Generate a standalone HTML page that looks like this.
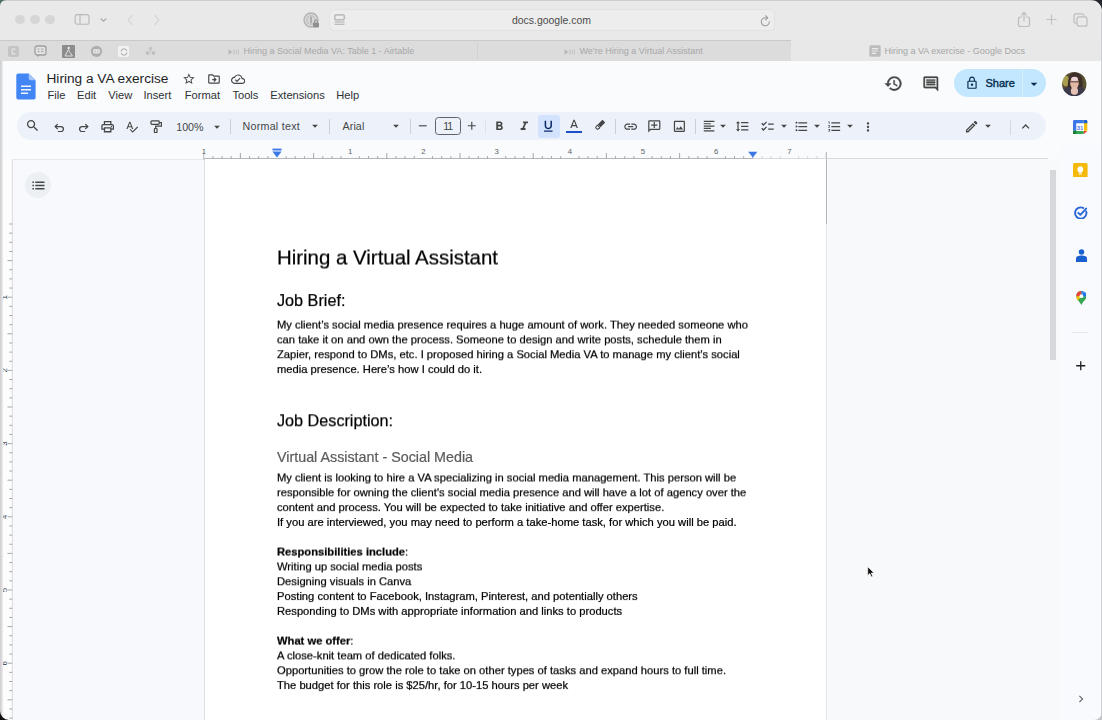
<!DOCTYPE html>
<html>
<head>
<meta charset="utf-8">
<title>Hiring a VA exercise - Google Docs</title>
<style>
*{box-sizing:border-box;margin:0;padding:0}
html,body{width:1102px;height:720px;overflow:hidden;background:#f9fbfd}
body{font-family:"Liberation Sans",sans-serif;position:relative;color:#202124}
.abs{position:absolute;display:block}
.t{position:absolute;white-space:nowrap;line-height:1}
.doc{position:absolute;left:277px;white-space:nowrap;color:#000;line-height:1;will-change:transform;-webkit-text-stroke:.22px currentColor}
</style>
</head>
<body>
<!-- ===== Safari chrome ===== -->
<div class="abs" style="left:0px;top:0px;width:1102px;height:40px;background:#e9e9e9;"></div>
<div class="abs" style="left:0px;top:0px;width:1102px;height:1px;background:#cdcdcd;"></div>
<div class="abs" style="left:0px;top:40px;width:791px;height:21px;background:#dcdcdc;border-top:1px solid #c9c9c9"></div>
<div class="abs" style="left:791px;top:40px;width:311px;height:21px;background:#e8e8e8;"></div>
<div class="abs" style="left:477px;top:43px;width:1px;height:16px;background:#d2d2d2;"></div>
<svg class="abs" style="left:0;top:0" width="8" height="8" viewBox="0 0 8 8"><path d="M0 0h6A6 6 0 0 0 0 6z" fill="#4f6e69"/></svg>
<svg class="abs" style="left:1088px;top:0" width="14" height="14" viewBox="0 0 14 14"><path d="M14 0H3A11 11 0 0 1 14 11z" fill="#23262b"/></svg>
<div class="abs" style="left:15.2px;top:14.9px;width:9.6px;height:9.6px;background:#d6d6d6;border-radius:50%"></div>
<div class="abs" style="left:30.2px;top:14.9px;width:9.6px;height:9.6px;background:#d6d6d6;border-radius:50%"></div>
<div class="abs" style="left:45.2px;top:14.9px;width:9.6px;height:9.6px;background:#d6d6d6;border-radius:50%"></div>
<svg class="abs" style="left:74px;top:13px" width="17" height="13" viewBox="0 0 17 13"><rect x="1.200" y="1.600" width="13.800" height="9.600" rx="2" fill="none" stroke="#b9b9b9" stroke-width="1.150"/><path d="M6 1.600v9.600" stroke="#b9b9b9" stroke-width="1.150"/></svg>
<svg class="abs" style="left:99px;top:16.500px" width="9" height="7" viewBox="0 0 9 7"><path d="M2 1.800L4.500 4.200L7 1.800" fill="none" stroke="#adadad" stroke-width="1.200" stroke-linecap="round" stroke-linejoin="round"/></svg>
<svg class="abs" style="left:125px;top:13px" width="10" height="14" viewBox="0 0 10 14"><path d="M7.200 2.600L3 7L7.200 11.400" fill="none" stroke="#d8d8d8" stroke-width="1.400" stroke-linecap="round" stroke-linejoin="round"/></svg>
<svg class="abs" style="left:152px;top:13px" width="10" height="14" viewBox="0 0 10 14"><path d="M2.800 2.600L7 7L2.800 11.400" fill="none" stroke="#d8d8d8" stroke-width="1.400" stroke-linecap="round" stroke-linejoin="round"/></svg>
<svg class="abs" style="left:303px;top:11.500px" width="17" height="17" viewBox="0 0 17 17"><circle cx="8" cy="8" r="7" fill="#d6d6d6" stroke="#b2b2b2" stroke-width="1.300"/><circle cx="8" cy="8" r="4.300" fill="none" stroke="#bdbdbd" stroke-width="1"/><rect x="7.200" y="4.500" width="1.700" height="7" rx=".8" fill="#a9a9a9"/><rect x="10" y="10.500" width="6" height="5" rx="1" fill="#8f8f8f"/><path d="M11.500 10.500v-1.200a1.500 1.500 0 0 1 3 0v1.200" fill="none" stroke="#8f8f8f" stroke-width="1"/></svg>
<div class="abs" style="left:329px;top:9px;width:446px;height:21.5px;background:#ededed;border-radius:5.500px;border:1px solid #e2e2e2"></div>
<svg class="abs" style="left:333.500px;top:13.800px" width="11" height="11" viewBox="0 0 11 11"><rect x=".8" y=".8" width="9.400" height="5" rx="1" fill="none" stroke="#adadad" stroke-width="1.200"/><path d="M.5 8h10M.5 10.300h10" stroke="#adadad" stroke-width="1.100"/></svg>
<div class="t" style="left:512px;top:15.7px;font-size:10.45px;color:#4c4c4c;">docs.google.com</div>
<svg class="abs" style="left:759.500px;top:15px" width="11" height="12" viewBox="0 0 11 12"><path d="M9.300 6.800A4 4 0 1 1 5.300 2.800h1.500" fill="none" stroke="#9a9a9a" stroke-width="1.050" stroke-linecap="round"/><path d="M5.600 .7L7.700 2.800L5.600 4.900" fill="none" stroke="#9a9a9a" stroke-width="1.050" stroke-linecap="round" stroke-linejoin="round"/></svg>
<svg class="abs" style="left:1017px;top:10.500px" width="14" height="17" viewBox="0 0 14 17"><path d="M4.500 6H3.200A1.700 1.700 0 0 0 1.500 7.700v6.100a1.700 1.700 0 0 0 1.700 1.700h7.600a1.700 1.700 0 0 0 1.700-1.700V7.700A1.700 1.700 0 0 0 10.800 6H9.500" fill="none" stroke="#bdbdbd" stroke-width="1.200" stroke-linecap="round"/><path d="M7 10V1.500M4.500 3.800L7 1.300L9.500 3.800" fill="none" stroke="#bdbdbd" stroke-width="1.200" stroke-linecap="round" stroke-linejoin="round"/></svg>
<svg class="abs" style="left:1045.500px;top:14.200px" width="11" height="11" viewBox="0 0 11 11"><path d="M5.500 .8v9.400M.8 5.500h9.400" stroke="#c2c2c2" stroke-width="1.200" stroke-linecap="round"/></svg>
<svg class="abs" style="left:1073px;top:12.500px" width="15" height="14" viewBox="0 0 15 14"><rect x="4" y="3.800" width="10" height="9.400" rx="2" fill="none" stroke="#bdbdbd" stroke-width="1.200"/><path d="M2.600 10.200A1.800 1.800 0 0 1 1 8.400V2.800A1.900 1.900 0 0 1 2.900 .9h6.200a1.800 1.800 0 0 1 1.700 1.400" fill="none" stroke="#bdbdbd" stroke-width="1.200" stroke-linecap="round"/></svg>
<div class="abs" style="left:8px;top:46px;width:10.5px;height:10.5px;background:#c4c4c4;border-radius:2px"></div>
<svg class="abs" style="left:10px;top:48px" width="7" height="7" viewBox="0 0 7 7"><path d="M5.500 1.200H2.200v4.600h3.300" fill="none" stroke="#e4e4e4" stroke-width="1.200"/></svg>
<svg class="abs" style="left:34px;top:44.500px" width="13" height="13" viewBox="0 0 13 13"><rect x="1" y="1" width="11" height="9" rx="2.200" fill="#e3e3e3" stroke="#9e9e9e" stroke-width="1.300"/><path d="M3.500 4.200h2M3.500 6.600h2M7 4.200h2.500M7 6.600h2.500" stroke="#a2a2a2" stroke-width="1"/><path d="M3.500 10v2.200l2.300-2.200" fill="#9e9e9e"/></svg>
<div class="abs" style="left:62px;top:45px;width:12.5px;height:12.5px;background:#8c8c8c;border-radius:1px"></div>
<svg class="abs" style="left:62px;top:45px" width="12.500" height="12.500" viewBox="0 0 12.500 12.500"><circle cx="6.700" cy="3" r="1.200" fill="#e8e8e8"/><path d="M6.500 4.500L3 11h7.500L7.300 6.500z" fill="none" stroke="#e8e8e8" stroke-width=".9"/></svg>
<svg class="abs" style="left:89.500px;top:44.500px" width="13" height="13" viewBox="0 0 13 13"><circle cx="6.500" cy="6.300" r="5.600" fill="#aeaeae"/><rect x="3" y="4.300" width="7" height="4.200" rx="1.400" fill="#e6e6e6"/><circle cx="5.100" cy="6.400" r=".6" fill="#aeaeae"/><circle cx="7.900" cy="6.400" r=".6" fill="#aeaeae"/></svg>
<div class="abs" style="left:117.5px;top:45.5px;width:11.5px;height:11.5px;background:#f2f2f2;border-radius:2px"></div>
<svg class="abs" style="left:118.500px;top:46.500px" width="10" height="10" viewBox="0 0 10 10"><path d="M2.200 4.200A2.900 2.900 0 0 1 7.600 3.500M7.800 5.800A2.900 2.900 0 0 1 2.400 6.500" fill="none" stroke="#b7b7b7" stroke-width="1.300" stroke-linecap="round"/></svg>
<svg class="abs" style="left:145px;top:46px" width="11" height="10" viewBox="0 0 11 10"><circle cx="5.500" cy="2.300" r="1.600" fill="#c0c0c0"/><circle cx="2.600" cy="7" r="1.900" fill="#c0c0c0"/><circle cx="8.400" cy="7" r="1.900" fill="#c0c0c0"/><path d="M5.500 3v3" stroke="#c0c0c0" stroke-width="1"/></svg>
<svg class="abs" style="left:228px;top:47.500px" width="13" height="8" viewBox="0 0 13 8"><path d="M.5 1l4 3-4 3z" fill="#b9b9b9"/><path d="M6 1.500v5M8.200 2.500v3.500M10.400 1.500v5" stroke="#c3c3c3" stroke-width="1.200"/></svg>
<div class="t" style="left:243.5px;top:46.9px;font-size:9px;color:#a8a8a8;">Hiring a Social Media VA: Table 1 - Airtable</div>
<svg class="abs" style="left:564px;top:47.500px" width="13" height="8" viewBox="0 0 13 8"><path d="M.5 1l4 3-4 3z" fill="#b9b9b9"/><path d="M6 1.500v5M8.200 2.500v3.500M10.400 1.500v5" stroke="#c3c3c3" stroke-width="1.200"/></svg>
<div class="t" style="left:579.5px;top:46.9px;font-size:9px;color:#a8a8a8;">We’re Hiring a Virtual Assistant</div>
<svg class="abs" style="left:868.500px;top:45px" width="12" height="12" viewBox="0 0 12 12"><rect x=".3" y=".3" width="11.400" height="11.400" rx="1.800" fill="#bcbcbc"/><path d="M2.800 3.600h6.400M2.800 6h6.400M2.800 8.400h4.300" stroke="#ececec" stroke-width="1.100"/></svg>
<div class="t" style="left:884.5px;top:46.9px;font-size:9px;color:#a6a6a6;">Hiring a VA exercise - Google Docs</div>
<!-- ===== Docs header ===== -->
<div class="abs" style="left:0px;top:61px;width:1102px;height:84px;background:#f9fbfd;"></div>
<svg class="abs" style="left:16px;top:72.500px" width="20" height="27" viewBox="0 0 20 27"><path d="M2.300 .4h10.400L19.600 7.300v17.100a2 2 0 0 1-2 2H2.300a2 2 0 0 1-2-2V2.400a2 2 0 0 1 2-2z" fill="#4285f4"/><path d="M12.700 .4L19.600 7.300h-4.900a2 2 0 0 1-2-2z" fill="#a6c5fa"/><path d="M5 13.300h10M5 16.800h10M5 20.300h7" stroke="#f1f6fe" stroke-width="1.500"/></svg>
<div class="t" style="left:46.5px;top:71.7px;font-size:13.66px;color:#1f1f1f;">Hiring a VA exercise</div>
<svg class="abs" style="left:182.30px;top:71.80px" width="13.8" height="13.8" viewBox="0 0 24 24"><path fill="#444746" d="M22 9.240l-7.190-.620L12 2 9.190 8.630 2 9.240l5.460 4.730L5.820 21 12 17.270 18.180 21l-1.630-7.030L22 9.240zM12 15.400l-3.760 2.270 1-4.280-3.320-2.880 4.380-.380L12 6.100l1.710 4.040 4.380.380-3.320 2.880 1 4.280L12 15.400z"/></svg>
<svg class="abs" style="left:206.60px;top:71.90px" width="14" height="14" viewBox="0 0 24 24"><path fill="#444746" d="M20 6h-8l-2-2H4c-1.100 0-2 .900-2 2v12c0 1.100.900 2 2 2h16c1.100 0 2-.900 2-2V8c0-1.100-.900-2-2-2zm0 12H4V6h5.170l2 2H20v10zm-7.160-4H9v-2h3.840l-1.600-1.600L12.660 9l4 4-4 4-1.410-1.410L12.840 14z"/></svg>
<svg class="abs" style="left:230.85px;top:71.75px" width="14.3" height="14.3" viewBox="0 0 24 24"><path fill="#444746" d="M19.350 10.040C18.670 6.590 15.640 4 12 4 9.110 4 6.600 5.640 5.350 8.040 2.340 8.360 0 10.910 0 14c0 3.310 2.690 6 6 6h13c2.760 0 5-2.240 5-5 0-2.640-2.050-4.780-4.650-4.960zM19 18H6c-2.210 0-4-1.790-4-4 0-2.050 1.530-3.760 3.560-3.970l1.070-.110.500-.950C8.080 7.140 9.940 6 12 6c2.620 0 4.880 1.860 5.390 4.430l.300 1.500 1.530.110c1.560.100 2.780 1.410 2.780 2.960 0 1.650-1.350 3-3 3zm-9-3.820l-2.090-2.090L6.500 13.500 10 17l6.010-6.010-1.410-1.410z"/></svg>
<div class="t" style="left:47.5px;top:90.3px;font-size:11.15px;color:#303134;">File</div>
<div class="t" style="left:77px;top:90.3px;font-size:11.15px;color:#303134;">Edit</div>
<div class="t" style="left:108.3px;top:90.3px;font-size:11.15px;color:#303134;">View</div>
<div class="t" style="left:143.5px;top:90.3px;font-size:11.15px;color:#303134;">Insert</div>
<div class="t" style="left:184.8px;top:90.3px;font-size:11.15px;color:#303134;">Format</div>
<div class="t" style="left:232.4px;top:90.3px;font-size:11.15px;color:#303134;">Tools</div>
<div class="t" style="left:270.3px;top:90.3px;font-size:11.15px;color:#303134;">Extensions</div>
<div class="t" style="left:336.2px;top:90.3px;font-size:11.15px;color:#303134;">Help</div>
<svg class="abs" style="left:884.10px;top:74.30px" width="19" height="19" viewBox="0 0 24 24"><path fill="#444746" stroke="#444746" stroke-width="0.5" d="M13 3c-4.970 0-9 4.030-9 9H1l3.890 3.890.07.140L9 12H6c0-3.870 3.130-7 7-7s7 3.130 7 7-3.130 7-7 7c-1.930 0-3.680-.790-4.940-2.060l-1.420 1.420C8.270 19.990 10.510 21 13 21c4.970 0 9-4.030 9-9s-4.030-9-9-9zm-1 5v5l4.280 2.540.720-1.210-3.500-2.080V8H12z"/></svg>
<svg class="abs" style="left:922.20px;top:75.40px" width="17.6" height="17.6" viewBox="0 0 24 24"><path fill="#444746" stroke="#444746" stroke-width="0.4" d="M21.990 4c0-1.100-.890-2-1.990-2H4c-1.100 0-2 .900-2 2v12c0 1.100.900 2 2 2h14l4 4-.010-18zM20 4v13.170L18.830 16H4V4h16zM6 12h12v2H6zm0-3h12v2H6zm0-3h12v2H6z"/></svg>
<div class="abs" style="left:953.8px;top:68.7px;width:92.7px;height:28.7px;background:#c2e7ff;border-radius:14.500px"></div>
<div class="abs" style="left:1021.6px;top:69.5px;width:1px;height:27px;background:#d8effd;"></div>
<svg class="abs" style="left:965.00px;top:76.00px" width="14" height="14" viewBox="0 0 24 24"><path fill="#062e4f" d="M18 8h-1V6c0-2.760-2.240-5-5-5S7 3.240 7 6v2H6c-1.100 0-2 .900-2 2v10c0 1.100.900 2 2 2h12c1.100 0 2-.900 2-2V10c0-1.100-.900-2-2-2zM9 6c0-1.660 1.340-3 3-3s3 1.340 3 3v2H9V6zm9 14H6V10h12v10zm-6-3c1.100 0 2-.900 2-2s-.900-2-2-2-2 .900-2 2 .900 2 2 2z"/></svg>
<div class="t" style="left:985.4px;top:78.1px;font-size:11.05px;color:#062e4f;-webkit-text-stroke:.4px #062e4f">Share</div>
<svg class="abs" style="left:1026.00px;top:75.90px" width="16" height="16" viewBox="0 0 24 24"><path fill="#062e4f" d="M7 10l5 5 5-5z"/></svg>
<svg class="abs" style="left:1062.300px;top:71.600px" width="24.500" height="24.300" viewBox="0 0 24 24"><defs><clipPath id="av"><circle cx="12" cy="12" r="12"/></clipPath><filter id="avb" x="-10%" y="-10%" width="120%" height="120%"><feGaussianBlur stdDeviation=".55"/></filter></defs><g clip-path="url(#av)"><g filter="url(#avb)"><rect x="-2" y="-2" width="28" height="28" fill="#544a30"/><ellipse cx="3.600" cy="8.800" rx="3.600" ry="5.400" fill="#a89c4e"/><ellipse cx="22" cy="10" rx="2.500" ry="5" fill="#5a5232"/><path d="M5.800 16C5 6 8 .6 12.800 .6S21.500 6 20 16z" fill="#3e2e2a"/><path d="M0 26V19c2-3 5-4.500 7.500-4.500L10 20l2.200 1.500L14.500 20l2-5.500c3 0 6 2 7.500 5V26z" fill="#3b394a"/><ellipse cx="12.200" cy="10.900" rx="4.300" ry="5.900" fill="#e2b7a6"/><ellipse cx="12.200" cy="18.800" rx="3.600" ry="3.800" fill="#e5c0b3"/><ellipse cx="12.300" cy="6.800" rx="3.300" ry="2.100" fill="#ead2d6"/><path d="M7.800 9.700h9" stroke="#4a3836" stroke-width="1"/></g></g></svg>
<!-- ===== Toolbar ===== -->
<div class="abs" style="left:17px;top:111.8px;width:1028.5px;height:28.2px;background:#edf2fa;border-radius:14px"></div>
<svg class="abs" style="left:24.95px;top:118.15px" width="15.3" height="15.3" viewBox="0 0 24 24"><path fill="#444746" d="M15.5 14h-.79l-.28-.27A6.471 6.471 0 0 0 16 9.5 6.5 6.5 0 1 0 9.5 16c1.61 0 3.09-.59 4.23-1.570l.27.28v.79l5 4.990L20.490 19l-4.990-5zm-6 0C7.010 14 5 11.990 5 9.500S7.010 5 9.500 5 14 7.010 14 9.500 11.990 14 9.500 14z"/></svg>
<svg class="abs" style="left:53.500px;top:122.500px" width="11" height="9.500" viewBox="0 0 11 9.500"><path d="M1.500 3.600h5.400a2.500 2.500 0 0 1 0 5H3.900" fill="none" stroke="#444746" stroke-width="1.300"/><path d="M3.700 1.100L1.200 3.600L3.700 6.100" fill="none" stroke="#444746" stroke-width="1.300"/></svg>
<svg class="abs" style="left:77.500px;top:122.500px" width="11" height="9.500" viewBox="0 0 11 9.500"><path d="M9.500 3.600H4.100a2.500 2.500 0 0 0 0 5H7.100" fill="none" stroke="#444746" stroke-width="1.300"/><path d="M7.300 1.100L9.800 3.600L7.300 6.100" fill="none" stroke="#444746" stroke-width="1.300"/></svg>
<svg class="abs" style="left:99.95px;top:118.85px" width="15.3" height="15.3" viewBox="0 0 24 24"><path fill="#444746" d="M19 8h-1V3H6v5H5c-1.660 0-3 1.340-3 3v6h4v4h12v-4h4v-6c0-1.660-1.340-3-3-3zM8 5h8v3H8V5zm8 12v2H8v-4h8v2zm2-2v-2H6v2H4v-4c0-.550.450-1 1-1h14c.550 0 1 .450 1 1v4h-2z M18 11.5m-1 0a1 1 0 1 0 2 0a1 1 0 1 0 -2 0"/></svg>
<svg class="abs" style="left:124.50px;top:119.50px" width="13.6" height="13.6" viewBox="0 0 24 24"><path fill="#444746" d="M12.450 16h2.090L9.430 3H7.570L2.460 16h2.090l1.120-3h5.640l1.140 3zm-6.020-5L8.500 5.480 10.570 11H6.430zm15.160.590l-8.090 8.090L9.830 16l-1.410 1.410 5.090 5.090L23 13l-1.410-1.410z"/></svg>
<svg class="abs" style="left:149.500px;top:119.800px" width="12.500" height="13.500" viewBox="0 0 12.500 13.500"><rect x="1" y=".9" width="8.200" height="3.400" rx=".8" fill="none" stroke="#444746" stroke-width="1.250"/><path d="M9.200 2.600h2.300v3.600H5.700v2.300" fill="none" stroke="#444746" stroke-width="1.250"/><rect x="4.400" y="8.500" width="2.600" height="4" rx=".6" fill="none" stroke="#444746" stroke-width="1.200"/></svg>
<div class="t" style="left:176.2px;top:121.6px;font-size:10.7px;color:#444746;">100%</div>
<svg class="abs" style="left:210.30px;top:119.50px" width="14" height="14" viewBox="0 0 24 24"><path fill="#444746" d="M7 10l5 5 5-5z"/></svg>
<div class="abs" style="left:230.2px;top:118.5px;width:1px;height:15px;background:#cbcfd7;"></div>
<div class="t" style="left:242.5px;top:121.2px;font-size:10.7px;color:#444746;letter-spacing:.26px">Normal text</div>
<svg class="abs" style="left:308.30px;top:119.30px" width="14" height="14" viewBox="0 0 24 24"><path fill="#444746" d="M7 10l5 5 5-5z"/></svg>
<div class="abs" style="left:329.3px;top:118.5px;width:1px;height:15px;background:#cbcfd7;"></div>
<div class="t" style="left:342.5px;top:121.2px;font-size:10.7px;color:#444746;letter-spacing:.1px">Arial</div>
<svg class="abs" style="left:388.80px;top:119.30px" width="14" height="14" viewBox="0 0 24 24"><path fill="#444746" d="M7 10l5 5 5-5z"/></svg>
<div class="abs" style="left:410.3px;top:118.5px;width:1px;height:15px;background:#cbcfd7;"></div>
<svg class="abs" style="left:415.90px;top:119.40px" width="13.6" height="13.6" viewBox="0 0 24 24"><path fill="#444746" d="M19 13H5v-2h14v2z"/></svg>
<div class="abs" style="left:434.6px;top:117.2px;width:26px;height:17.4px;background:transparent;border:1px solid #5f6368;border-radius:3.500px"></div>
<div class="t" style="left:443.2px;top:121.3px;font-size:10.5px;color:#444746;letter-spacing:-.900px">11</div>
<svg class="abs" style="left:465.10px;top:119.40px" width="13.6" height="13.6" viewBox="0 0 24 24"><path fill="#444746" d="M19 13h-6v6h-2v-6H5v-2h6V5h2v6h6v2z"/></svg>
<div class="abs" style="left:485px;top:118.5px;width:1px;height:15px;background:#dfe3ea;"></div>
<svg class="abs" style="left:492.40px;top:119.00px" width="14.6" height="14.6" viewBox="0 0 24 24"><path fill="#444746" d="M15.600 10.790c.970-.670 1.650-1.770 1.650-2.790 0-2.260-1.750-4-4-4H7v14h7.040c2.090 0 3.710-1.700 3.710-3.790 0-1.520-.860-2.820-2.150-3.420zM10 6.500h3c.830 0 1.500.670 1.500 1.500s-.670 1.500-1.500 1.500h-3v-3zm3.500 9H10v-3h3.500c.830 0 1.500.670 1.500 1.500s-.670 1.500-1.500 1.500z"/></svg>
<svg class="abs" style="left:516.70px;top:119.00px" width="14.6" height="14.6" viewBox="0 0 24 24"><path fill="#444746" d="M10 4v3h2.210l-3.420 8H6v3h8v-3h-2.210l3.420-8H18V4z"/></svg>
<div class="abs" style="left:538px;top:115px;width:22px;height:22.5px;background:#d3e3fd;border-radius:3px"></div>
<svg class="abs" style="left:541.40px;top:119.20px" width="14.6" height="14.6" viewBox="0 0 24 24"><path fill="#0b2a66" d="M12 17c3.310 0 6-2.690 6-6V3h-2.500v8c0 1.930-1.570 3.500-3.500 3.500S8.500 12.930 8.500 11V3H6v8c0 3.310 2.690 6 6 6zm-7 2v2h14v-2H5z"/></svg>
<svg class="abs" style="left:566.90px;top:117.80px" width="14.2" height="14.2" viewBox="0 0 24 24"><path fill="#444746" d="M11 3L5.500 17h2.250l1.120-3h6.250l1.120 3h2.250L13 3h-2zm-1.380 9L12 5.670 14.380 12H9.620z"/></svg>
<div class="abs" style="left:565.7px;top:130.7px;width:16.4px;height:2.6px;background:#1b50c9;"></div>
<svg class="abs" style="left:592.700px;top:118.500px" width="13" height="13" viewBox="0 0 13 13"><g transform="rotate(45 6.500 6.500)"><rect x="4.500" y="0.300" width="4" height="6.800" rx=".8" fill="#444746"/><path d="M4.700 7.800h3.600v1.200L7.600 10.800H5.400L4.700 9z" fill="none" stroke="#444746" stroke-width="1"/></g></svg>
<div class="abs" style="left:615px;top:118.5px;width:1px;height:15px;background:#cbcfd7;"></div>
<svg class="abs" style="left:622.75px;top:118.65px" width="15.3" height="15.3" viewBox="0 0 24 24"><path fill="#444746" d="M3.900 12c0-1.710 1.390-3.100 3.100-3.100h4V7H7c-2.760 0-5 2.240-5 5s2.240 5 5 5h4v-1.900H7c-1.710 0-3.100-1.390-3.100-3.100zM8 13h8v-2H8v2zm9-6h-4v1.900h4c1.710 0 3.100 1.390 3.100 3.100s-1.390 3.100-3.100 3.100h-4V17h4c2.760 0 5-2.240 5-5s-2.240-5-5-5z"/></svg>
<svg class="abs" style="left:647.20px;top:119.40px" width="14.6" height="14.6" viewBox="0 0 24 24"><path fill="#444746" transform="translate(24 0) scale(-1 1)" d="M22 4c0-1.100-.900-2-2-2H4c-1.100 0-2 .900-2 2v12c0 1.100.900 2 2 2h14l4 4V4zm-2 13.170L18.830 16H4V4h16v13.170zM13 5h-2v4H7v2h4v4h2v-4h4V9h-4z"/></svg>
<svg class="abs" style="left:672.10px;top:119.10px" width="14.8" height="14.8" viewBox="0 0 24 24"><path fill="#444746" d="M19 5v14H5V5h14m0-2H5c-1.100 0-2 .900-2 2v14c0 1.100.900 2 2 2h14c1.100 0 2-.900 2-2V5c0-1.100-.900-2-2-2zm-4.860 8.860l-3 3.870L9 13.140 6 17h12l-3.860-5.140z"/></svg>
<div class="abs" style="left:695px;top:118.5px;width:1px;height:15px;background:#cbcfd7;"></div>
<svg class="abs" style="left:701.90px;top:119.20px" width="14.2" height="14.2" viewBox="0 0 24 24"><path fill="#444746" d="M15 15H3v2h12v-2zm0-8H3v2h12V7zM3 13h18v-2H3v2zm0 8h18v-2H3v2zM3 3v2h18V3H3z"/></svg>
<svg class="abs" style="left:715.60px;top:119.30px" width="14" height="14" viewBox="0 0 24 24"><path fill="#444746" d="M7 10l5 5 5-5z"/></svg>
<svg class="abs" style="left:734.70px;top:119.00px" width="14.6" height="14.6" viewBox="0 0 24 24"><path fill="#444746" d="M6 7h2.500L5 3.500 1.500 7H4v10H1.500L5 20.500 8.500 17H6V7zm4-2v2h12V5H10zm0 14h12v-2H10v2zm0-6h12v-2H10v2z"/></svg>
<svg class="abs" style="left:759.70px;top:118.80px" width="15" height="15" viewBox="0 0 24 24"><path fill="#444746" d="M22 7h-9v2h9V7zm0 8h-9v2h9v-2zM5.540 11L2 7.460l1.410-1.410 2.120 2.120 4.240-4.240 1.410 1.410L5.540 11zm0 8L2 15.460l1.410-1.410 2.120 2.120 4.240-4.240 1.410 1.410L5.540 19z"/></svg>
<svg class="abs" style="left:776.50px;top:119.30px" width="14" height="14" viewBox="0 0 24 24"><path fill="#444746" d="M7 10l5 5 5-5z"/></svg>
<svg class="abs" style="left:793.50px;top:118.80px" width="15" height="15" viewBox="0 0 24 24"><path fill="#444746" d="M4 10.500c-.830 0-1.500.670-1.500 1.500s.670 1.500 1.500 1.500 1.500-.670 1.500-1.500-.670-1.500-1.500-1.500zm0-6c-.830 0-1.500.670-1.500 1.500S3.170 7.500 4 7.500 5.500 6.830 5.500 6 4.830 4.500 4 4.500zm0 12c-.830 0-1.500.680-1.500 1.500s.680 1.500 1.500 1.500 1.500-.680 1.500-1.500-.670-1.500-1.500-1.500zM7 19h14v-2H7v2zm0-6h14v-2H7v2zm0-8v2h14V5H7z"/></svg>
<svg class="abs" style="left:809.90px;top:119.30px" width="14" height="14" viewBox="0 0 24 24"><path fill="#444746" d="M7 10l5 5 5-5z"/></svg>
<svg class="abs" style="left:826.90px;top:118.80px" width="15" height="15" viewBox="0 0 24 24"><path fill="#444746" d="M2 17h2v.500H3v1h1v.500H2v1h3v-4H2v1zm1-9h1V4H2v1h1v3zm-1 3h1.800L2 13.100v.900h3v-1H3.200L5 10.900V10H2v1zm5-6v2h14V5H7zm0 14h14v-2H7v2zm0-6h14v-2H7v2z"/></svg>
<svg class="abs" style="left:843.20px;top:119.30px" width="14" height="14" viewBox="0 0 24 24"><path fill="#444746" d="M7 10l5 5 5-5z"/></svg>
<svg class="abs" style="left:861.00px;top:119.50px" width="14" height="14" viewBox="0 0 24 24"><path fill="#444746" d="M12 8c1.100 0 2-.900 2-2s-.900-2-2-2-2 .900-2 2 .900 2 2 2zm0 2c-1.100 0-2 .900-2 2s.900 2 2 2 2-.900 2-2-.900-2-2-2zm0 6c-1.100 0-2 .900-2 2s.900 2 2 2 2-.900 2-2-.900-2-2-2z"/></svg>
<svg class="abs" style="left:963.65px;top:118.55px" width="15.3" height="15.3" viewBox="0 0 24 24"><path fill="#444746" d="M14.060 9.020l.920.920L5.920 19H5v-.920l9.060-9.060M17.660 3c-.250 0-.510.100-.700.290l-1.830 1.830 3.750 3.750 1.830-1.830c.390-.390.390-1.020 0-1.410l-2.340-2.340c-.200-.200-.450-.290-.710-.290zm-3.600 3.190L3 17.250V21h3.750L17.810 9.940l-3.750-3.750z"/></svg>
<svg class="abs" style="left:980.80px;top:118.80px" width="14" height="14" viewBox="0 0 24 24"><path fill="#444746" d="M7 10l5 5 5-5z"/></svg>
<div class="abs" style="left:1010.4px;top:119.5px;width:1px;height:15.5px;background:#d5d9e2;"></div>
<svg class="abs" style="left:1018.35px;top:119.15px" width="15.3" height="15.3" viewBox="0 0 24 24"><path fill="#444746" d="M12 8l-6 6 1.410 1.410L12 10.830l4.590 4.580L18 14z"/></svg>
<!-- ===== Document ===== -->
<div class="abs" style="left:13px;top:159px;width:191px;height:561px;background:#f8f9fd;"></div>
<div class="abs" style="left:827px;top:159px;width:233px;height:561px;background:#f8f9fa;"></div>
<div class="abs" style="left:13px;top:159px;width:191px;height:1px;background:#e6e8ec;"></div>
<div class="abs" style="left:204.2px;top:159px;width:622.5px;height:561px;background:#fff;"></div>
<div class="abs" style="left:203.7px;top:159px;width:1px;height:561px;background:#dfe1e5;"></div>
<div class="abs" style="left:826.3px;top:159px;width:1px;height:561px;background:#e3e5e8;"></div>
<div class="abs" style="left:826.3px;top:152px;width:1px;height:72px;background:#b5b7bb;"></div>
<div class="doc" style="top:247px;transform:translateY(0.5px) rotate(.003deg);font-size:20.43px;">Hiring a Virtual Assistant</div>
<div class="doc" style="top:292px;transform:translateY(0.1px) rotate(.003deg);font-size:16.2px;">Job Brief:</div>
<div class="doc" style="top:319px;transform:translateY(0.6px) rotate(.003deg);font-size:11.19px;">My client’s social media presence requires a huge amount of work. They needed someone who</div>
<div class="doc" style="top:334px;transform:translateY(0.43px) rotate(.003deg);font-size:11.19px;">can take it on and own the process. Someone to design and write posts, schedule them in</div>
<div class="doc" style="top:349px;transform:translateY(0.26px) rotate(.003deg);font-size:11.19px;">Zapier, respond to DMs, etc. I proposed hiring a Social Media VA to manage my client’s social</div>
<div class="doc" style="top:364px;transform:translateY(0.09px) rotate(.003deg);font-size:11.19px;">media presence. Here’s how I could do it.</div>
<div class="doc" style="top:412px;transform:translateY(0.3px) rotate(.003deg);font-size:16.2px;">Job Description:</div>
<div class="doc" style="top:450px;transform:translateY(0px) rotate(.003deg);font-size:14.3px;color:#5c5c5c">Virtual Assistant - Social Media</div>
<div class="doc" style="top:472px;transform:translateY(0.5px) rotate(.003deg);font-size:11.19px;">My client is looking to hire a VA specializing in social media management. This person will be</div>
<div class="doc" style="top:487px;transform:translateY(0.33px) rotate(.003deg);font-size:11.19px;">responsible for owning the client’s social media presence and will have a lot of agency over the</div>
<div class="doc" style="top:502px;transform:translateY(0.16px) rotate(.003deg);font-size:11.19px;">content and process. You will be expected to take initiative and offer expertise.</div>
<div class="doc" style="top:516px;transform:translateY(0.99px) rotate(.003deg);font-size:11.19px;">If you are interviewed, you may need to perform a take-home task, for which you will be paid.</div>
<div class="doc" style="top:546px;transform:translateY(0.6px) rotate(.003deg);font-size:11.19px;"><b>Responsibilities include</b>:</div>
<div class="doc" style="top:561px;transform:translateY(0.43px) rotate(.003deg);font-size:11.19px;">Writing up social media posts</div>
<div class="doc" style="top:576px;transform:translateY(0.26px) rotate(.003deg);font-size:11.19px;">Designing visuals in Canva</div>
<div class="doc" style="top:591px;transform:translateY(0.09px) rotate(.003deg);font-size:11.19px;">Posting content to Facebook, Instagram, Pinterest, and potentially others</div>
<div class="doc" style="top:605px;transform:translateY(0.92px) rotate(.003deg);font-size:11.19px;">Responding to DMs with appropriate information and links to products</div>
<div class="doc" style="top:635px;transform:translateY(0.6px) rotate(.003deg);font-size:11.19px;"><b>What we offer</b>:</div>
<div class="doc" style="top:650px;transform:translateY(0.43px) rotate(.003deg);font-size:11.19px;">A close-knit team of dedicated folks.</div>
<div class="doc" style="top:665px;transform:translateY(0.26px) rotate(.003deg);font-size:11.19px;">Opportunities to grow the role to take on other types of tasks and expand hours to full time.</div>
<div class="doc" style="top:680px;transform:translateY(0.09px) rotate(.003deg);font-size:11.19px;">The budget for this role is $25/hr, for 10-15 hours per week</div>
<svg class="abs" style="left:867.100px;top:565.500px" width="7.700" height="12" viewBox="0 0 9 14"><path d="M.8 .8v10.400l2.500-2.300 1.700 3.900 1.700-.8-1.700-3.700h3.300z" fill="#111" stroke="#fff" stroke-width=".8"/></svg>
<!-- ===== Rulers ===== -->
<svg class="abs" style="left:0;top:144px" width="1060" height="16" viewBox="0 144 1060 16"><path d="M204 158.500H1048" stroke="#d9dbdf" stroke-width="1"/><path d="M204 158.500H752.8" stroke="#b4b6ba" stroke-width="1"/><path d="M212.95 156.2V158.500" stroke="#9b9da1" stroke-width=".9"/><path d="M222.10 156.2V158.500" stroke="#9b9da1" stroke-width=".9"/><path d="M231.25 156.2V158.500" stroke="#9b9da1" stroke-width=".9"/><path d="M240.40 153.0V158.500" stroke="#9b9da1" stroke-width=".9"/><path d="M249.55 156.2V158.500" stroke="#9b9da1" stroke-width=".9"/><path d="M258.70 156.2V158.500" stroke="#9b9da1" stroke-width=".9"/><path d="M267.85 156.2V158.500" stroke="#9b9da1" stroke-width=".9"/><path d="M286.15 156.2V158.500" stroke="#9b9da1" stroke-width=".9"/><path d="M295.30 156.2V158.500" stroke="#9b9da1" stroke-width=".9"/><path d="M304.45 156.2V158.500" stroke="#9b9da1" stroke-width=".9"/><path d="M313.60 153.0V158.500" stroke="#9b9da1" stroke-width=".9"/><path d="M322.75 156.2V158.500" stroke="#9b9da1" stroke-width=".9"/><path d="M331.90 156.2V158.500" stroke="#9b9da1" stroke-width=".9"/><path d="M341.05 156.2V158.500" stroke="#9b9da1" stroke-width=".9"/><path d="M359.35 156.2V158.500" stroke="#9b9da1" stroke-width=".9"/><path d="M368.50 156.2V158.500" stroke="#9b9da1" stroke-width=".9"/><path d="M377.65 156.2V158.500" stroke="#9b9da1" stroke-width=".9"/><path d="M386.80 153.0V158.500" stroke="#9b9da1" stroke-width=".9"/><path d="M395.95 156.2V158.500" stroke="#9b9da1" stroke-width=".9"/><path d="M405.10 156.2V158.500" stroke="#9b9da1" stroke-width=".9"/><path d="M414.25 156.2V158.500" stroke="#9b9da1" stroke-width=".9"/><path d="M432.55 156.2V158.500" stroke="#9b9da1" stroke-width=".9"/><path d="M441.70 156.2V158.500" stroke="#9b9da1" stroke-width=".9"/><path d="M450.85 156.2V158.500" stroke="#9b9da1" stroke-width=".9"/><path d="M460.00 153.0V158.500" stroke="#9b9da1" stroke-width=".9"/><path d="M469.15 156.2V158.500" stroke="#9b9da1" stroke-width=".9"/><path d="M478.30 156.2V158.500" stroke="#9b9da1" stroke-width=".9"/><path d="M487.45 156.2V158.500" stroke="#9b9da1" stroke-width=".9"/><path d="M505.75 156.2V158.500" stroke="#9b9da1" stroke-width=".9"/><path d="M514.90 156.2V158.500" stroke="#9b9da1" stroke-width=".9"/><path d="M524.05 156.2V158.500" stroke="#9b9da1" stroke-width=".9"/><path d="M533.20 153.0V158.500" stroke="#9b9da1" stroke-width=".9"/><path d="M542.35 156.2V158.500" stroke="#9b9da1" stroke-width=".9"/><path d="M551.50 156.2V158.500" stroke="#9b9da1" stroke-width=".9"/><path d="M560.65 156.2V158.500" stroke="#9b9da1" stroke-width=".9"/><path d="M578.95 156.2V158.500" stroke="#9b9da1" stroke-width=".9"/><path d="M588.10 156.2V158.500" stroke="#9b9da1" stroke-width=".9"/><path d="M597.25 156.2V158.500" stroke="#9b9da1" stroke-width=".9"/><path d="M606.40 153.0V158.500" stroke="#9b9da1" stroke-width=".9"/><path d="M615.55 156.2V158.500" stroke="#9b9da1" stroke-width=".9"/><path d="M624.70 156.2V158.500" stroke="#9b9da1" stroke-width=".9"/><path d="M633.85 156.2V158.500" stroke="#9b9da1" stroke-width=".9"/><path d="M652.15 156.2V158.500" stroke="#9b9da1" stroke-width=".9"/><path d="M661.30 156.2V158.500" stroke="#9b9da1" stroke-width=".9"/><path d="M670.45 156.2V158.500" stroke="#9b9da1" stroke-width=".9"/><path d="M679.60 153.0V158.500" stroke="#9b9da1" stroke-width=".9"/><path d="M688.75 156.2V158.500" stroke="#9b9da1" stroke-width=".9"/><path d="M697.90 156.2V158.500" stroke="#9b9da1" stroke-width=".9"/><path d="M707.05 156.2V158.500" stroke="#9b9da1" stroke-width=".9"/><path d="M725.35 156.2V158.500" stroke="#9b9da1" stroke-width=".9"/><path d="M734.50 156.2V158.500" stroke="#9b9da1" stroke-width=".9"/><path d="M743.65 156.2V158.500" stroke="#9b9da1" stroke-width=".9"/><path d="M752.80 153.0V158.500" stroke="#9b9da1" stroke-width=".9"/><path d="M761.95 156.2V158.500" stroke="#c9ccd0" stroke-width=".9"/><path d="M771.10 156.2V158.500" stroke="#c9ccd0" stroke-width=".9"/><path d="M780.25 156.2V158.500" stroke="#c9ccd0" stroke-width=".9"/><path d="M798.55 156.2V158.500" stroke="#c9ccd0" stroke-width=".9"/><path d="M807.70 156.2V158.500" stroke="#c9ccd0" stroke-width=".9"/><path d="M816.85 156.2V158.500" stroke="#c9ccd0" stroke-width=".9"/><path d="M826.00 153.0V158.500" stroke="#c9ccd0" stroke-width=".9"/><path d="M203.700 152.500V159.500" stroke="#b9bbbf" stroke-width="1"/><text x="203.8" y="154" font-family="Liberation Sans" font-size="7.800" fill="#5f6368" text-anchor="middle">1</text><text x="350.2" y="154" font-family="Liberation Sans" font-size="7.800" fill="#5f6368" text-anchor="middle">1</text><text x="423.4" y="154" font-family="Liberation Sans" font-size="7.800" fill="#5f6368" text-anchor="middle">2</text><text x="496.6" y="154" font-family="Liberation Sans" font-size="7.800" fill="#5f6368" text-anchor="middle">3</text><text x="569.8" y="154" font-family="Liberation Sans" font-size="7.800" fill="#5f6368" text-anchor="middle">4</text><text x="643.0" y="154" font-family="Liberation Sans" font-size="7.800" fill="#5f6368" text-anchor="middle">5</text><text x="716.2" y="154" font-family="Liberation Sans" font-size="7.800" fill="#5f6368" text-anchor="middle">6</text><text x="789.4" y="154" font-family="Liberation Sans" font-size="7.800" fill="#5f6368" text-anchor="middle">7</text><path d="M272.5 148.600h9v1.900h-9z" fill="#3c78e6"/><path d="M272.4 151.500h9.200L277.0 157.400z" fill="#3c78e6"/><path d="M748.2 151.700h9.200L752.8 157.600z" fill="#3c78e6"/></svg>
<svg class="abs" style="left:0;top:159px" width="14" height="561" viewBox="0 159 14 561"><rect x="0" y="159" width="12.500" height="561" fill="#fdfdfe"/><path d="M12.300 159V720" stroke="#d9dadd" stroke-width="1"/><path d="M9.3 224.00H12.300" stroke="#9b9da1" stroke-width=".9"/><path d="M9.3 233.15H12.300" stroke="#9b9da1" stroke-width=".9"/><path d="M9.3 242.30H12.300" stroke="#9b9da1" stroke-width=".9"/><path d="M9.3 251.45H12.300" stroke="#9b9da1" stroke-width=".9"/><path d="M7.500000000000001 260.60H12.300" stroke="#9b9da1" stroke-width=".9"/><path d="M9.3 269.75H12.300" stroke="#9b9da1" stroke-width=".9"/><path d="M9.3 278.90H12.300" stroke="#9b9da1" stroke-width=".9"/><path d="M9.3 288.05H12.300" stroke="#9b9da1" stroke-width=".9"/><text x="4.400" y="300.0" font-family="Liberation Sans" font-size="7.800" fill="#3c4043" text-anchor="middle" transform="rotate(-90 4.400 297.2)">1</text><path d="M7.800 297.20H12.300" stroke="#9b9da1" stroke-width=".9"/><path d="M9.3 306.35H12.300" stroke="#9b9da1" stroke-width=".9"/><path d="M9.3 315.50H12.300" stroke="#9b9da1" stroke-width=".9"/><path d="M9.3 324.65H12.300" stroke="#9b9da1" stroke-width=".9"/><path d="M7.500000000000001 333.80H12.300" stroke="#9b9da1" stroke-width=".9"/><path d="M9.3 342.95H12.300" stroke="#9b9da1" stroke-width=".9"/><path d="M9.3 352.10H12.300" stroke="#9b9da1" stroke-width=".9"/><path d="M9.3 361.25H12.300" stroke="#9b9da1" stroke-width=".9"/><text x="4.400" y="373.2" font-family="Liberation Sans" font-size="7.800" fill="#3c4043" text-anchor="middle" transform="rotate(-90 4.400 370.4)">2</text><path d="M7.800 370.40H12.300" stroke="#9b9da1" stroke-width=".9"/><path d="M9.3 379.55H12.300" stroke="#9b9da1" stroke-width=".9"/><path d="M9.3 388.70H12.300" stroke="#9b9da1" stroke-width=".9"/><path d="M9.3 397.85H12.300" stroke="#9b9da1" stroke-width=".9"/><path d="M7.500000000000001 407.00H12.300" stroke="#9b9da1" stroke-width=".9"/><path d="M9.3 416.15H12.300" stroke="#9b9da1" stroke-width=".9"/><path d="M9.3 425.30H12.300" stroke="#9b9da1" stroke-width=".9"/><path d="M9.3 434.45H12.300" stroke="#9b9da1" stroke-width=".9"/><text x="4.400" y="446.4" font-family="Liberation Sans" font-size="7.800" fill="#3c4043" text-anchor="middle" transform="rotate(-90 4.400 443.6)">3</text><path d="M7.800 443.60H12.300" stroke="#9b9da1" stroke-width=".9"/><path d="M9.3 452.75H12.300" stroke="#9b9da1" stroke-width=".9"/><path d="M9.3 461.90H12.300" stroke="#9b9da1" stroke-width=".9"/><path d="M9.3 471.05H12.300" stroke="#9b9da1" stroke-width=".9"/><path d="M7.500000000000001 480.20H12.300" stroke="#9b9da1" stroke-width=".9"/><path d="M9.3 489.35H12.300" stroke="#9b9da1" stroke-width=".9"/><path d="M9.3 498.50H12.300" stroke="#9b9da1" stroke-width=".9"/><path d="M9.3 507.65H12.300" stroke="#9b9da1" stroke-width=".9"/><text x="4.400" y="519.6" font-family="Liberation Sans" font-size="7.800" fill="#3c4043" text-anchor="middle" transform="rotate(-90 4.400 516.8)">4</text><path d="M7.800 516.80H12.300" stroke="#9b9da1" stroke-width=".9"/><path d="M9.3 525.95H12.300" stroke="#9b9da1" stroke-width=".9"/><path d="M9.3 535.10H12.300" stroke="#9b9da1" stroke-width=".9"/><path d="M9.3 544.25H12.300" stroke="#9b9da1" stroke-width=".9"/><path d="M7.500000000000001 553.40H12.300" stroke="#9b9da1" stroke-width=".9"/><path d="M9.3 562.55H12.300" stroke="#9b9da1" stroke-width=".9"/><path d="M9.3 571.70H12.300" stroke="#9b9da1" stroke-width=".9"/><path d="M9.3 580.85H12.300" stroke="#9b9da1" stroke-width=".9"/><text x="4.400" y="592.8" font-family="Liberation Sans" font-size="7.800" fill="#3c4043" text-anchor="middle" transform="rotate(-90 4.400 590.0)">5</text><path d="M7.800 590.00H12.300" stroke="#9b9da1" stroke-width=".9"/><path d="M9.3 599.15H12.300" stroke="#9b9da1" stroke-width=".9"/><path d="M9.3 608.30H12.300" stroke="#9b9da1" stroke-width=".9"/><path d="M9.3 617.45H12.300" stroke="#9b9da1" stroke-width=".9"/><path d="M7.500000000000001 626.60H12.300" stroke="#9b9da1" stroke-width=".9"/><path d="M9.3 635.75H12.300" stroke="#9b9da1" stroke-width=".9"/><path d="M9.3 644.90H12.300" stroke="#9b9da1" stroke-width=".9"/><path d="M9.3 654.05H12.300" stroke="#9b9da1" stroke-width=".9"/><text x="4.400" y="666.0" font-family="Liberation Sans" font-size="7.800" fill="#3c4043" text-anchor="middle" transform="rotate(-90 4.400 663.2)">6</text><path d="M7.800 663.20H12.300" stroke="#9b9da1" stroke-width=".9"/><path d="M9.3 672.35H12.300" stroke="#9b9da1" stroke-width=".9"/><path d="M9.3 681.50H12.300" stroke="#9b9da1" stroke-width=".9"/><path d="M9.3 690.65H12.300" stroke="#9b9da1" stroke-width=".9"/><path d="M7.500000000000001 699.80H12.300" stroke="#9b9da1" stroke-width=".9"/><path d="M9.3 708.95H12.300" stroke="#9b9da1" stroke-width=".9"/><path d="M9.3 718.10H12.300" stroke="#9b9da1" stroke-width=".9"/></svg>
<!-- ===== Side areas ===== -->
<div class="abs" style="left:25px;top:172px;width:26px;height:26px;background:#eceff4;border-radius:50%"></div>
<svg class="abs" style="left:32px;top:180.500px" width="13" height="9" viewBox="0 0 13 9"><path d="M3.300 1.300h9.200M3.300 4.500h9.200M3.300 7.700h9.200" stroke="#444746" stroke-width="1.500"/><path d="M.4 1.300h1.500M.4 4.500h1.500M.4 7.700h1.500" stroke="#444746" stroke-width="1.500"/></svg>
<div class="abs" style="left:1049.7px;top:170.3px;width:6.2px;height:190px;background:#d6d8dc;"></div>
<div class="abs" style="left:1060px;top:145px;width:42px;height:575px;background:#f8fafd;"></div>
<svg class="abs" style="left:1073.400px;top:120.200px" width="14.300" height="14.300" viewBox="0 0 24 24"><path d="M2 2h20v16l-4 4H2z" fill="#fff"/><path d="M0 2a2 2 0 0 1 2-2h16v5.500H5.500V18H0z" fill="#3b78e7"/><path d="M18 0h4a2 2 0 0 1 2 2v16h-5.500V5.500H18z" fill="#fbbc04"/><path d="M18 0h4a2 2 0 0 1 2 2v3.500h-6z" fill="#1a62d6"/><path d="M0 18h5.500v.5H18V24H2a2 2 0 0 1-2-2z" fill="#34a853"/><path d="M0 18h5.500v6H2a2 2 0 0 1-2-2z" fill="#188038"/><path d="M18 18.500h6L18 24z" fill="#ea4335"/><text x="11.800" y="16" font-family="Liberation Sans" font-size="10" font-weight="bold" fill="#4f7be0" text-anchor="middle">31</text></svg>
<svg class="abs" style="left:1073.400px;top:162.800px" width="14.600" height="14.600" viewBox="0 0 24 24"><rect width="24" height="24" rx="2.500" fill="#f4b90b"/><path d="M12 5.500a5 5 0 0 0-2.800 9.100V16h5.600v-1.400A5 5 0 0 0 12 5.500z" fill="#fff"/><rect x="9.600" y="17.300" width="4.800" height="1.800" fill="#fff"/></svg>
<svg class="abs" style="left:1074.300px;top:205.800px" width="13.600" height="13.600" viewBox="0 0 24 24"><path d="M21.500 9.500A10 10 0 1 1 16.500 3.500" fill="none" stroke="#2b66d9" stroke-width="3.300" stroke-linecap="round"/><path d="M7.500 12l3.700 3.700L21.500 4.500" fill="none" stroke="#2b66d9" stroke-width="3.300" stroke-linecap="round" stroke-linejoin="round"/></svg>
<svg class="abs" style="left:1075.800px;top:248.600px" width="11" height="13.200" viewBox="0 0 20 24"><circle cx="10" cy="5.300" r="5" fill="#1a5fd0"/><path d="M0 24v-6.500C0 13.500 4.500 12 10 12s10 1.500 10 5.500V24z" fill="#1a5fd0"/></svg>
<svg class="abs" style="left:1075.500px;top:290.800px" width="10.800" height="14" viewBox="0 0 18 24"><defs><clipPath id="pin"><path d="M9 0C4 0 0 3.900 0 8.800 0 14.500 6 17 9 24c3-7 9-9.500 9-15.200C18 3.900 14 0 9 0z"/></clipPath></defs><g clip-path="url(#pin)"><rect width="18" height="24" fill="#34a853"/><path d="M0 0h9v9H0z" fill="#ea4335"/><path d="M9 0h9v9l-9 0z" fill="#4285f4"/><path d="M0 9l9 0 -7 9H0z" fill="#fbbc04"/><path d="M18 0v9L9 9z" fill="#1a73e8"/></g><circle cx="9" cy="8.800" r="3.300" fill="#fff"/></svg>
<div class="abs" style="left:1072px;top:332px;width:16px;height:1px;background:#e3e6ea;"></div>
<svg class="abs" style="left:1073.25px;top:358.25px" width="15.5" height="15.5" viewBox="0 0 24 24"><path fill="#1f1f1f" d="M19 13h-6v6h-2v-6H5v-2h6V5h2v6h6v2z"/></svg>
<svg class="abs" style="left:1073.50px;top:691.50px" width="14" height="14" viewBox="0 0 24 24"><path fill="#62656a" d="M10 6L8.590 7.410 13.170 12l-4.580 4.590L10 18l6-6z"/></svg>
<div class="abs" style="left:1101px;top:12px;width:1px;height:708px;background:#cfd0d3;"></div>
<div class="abs" style="left:0px;top:61px;width:3px;height:659px;background:linear-gradient(to right,#cbcbce,#efeff1);"></div>
<svg class="abs" style="left:0;top:711px" width="9" height="9" viewBox="0 0 9 9"><path d="M0 0A9 9 0 0 0 9 9H0z" fill="#111"/></svg>
<svg class="abs" style="left:1094px;top:712px" width="8" height="8" viewBox="0 0 8 8"><path d="M8 0A8 8 0 0 1 0 8H8z" fill="#c4c5c8"/></svg>
</body>
</html>
